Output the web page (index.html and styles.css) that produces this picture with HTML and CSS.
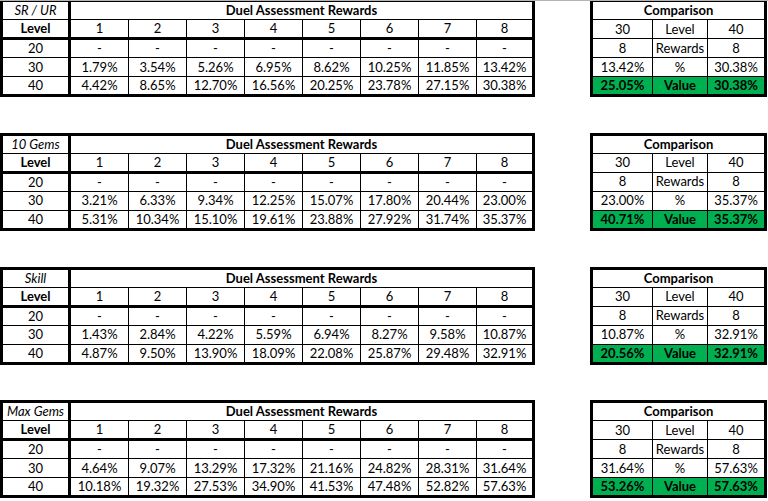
FILE: index.html
```html
<!DOCTYPE html>
<html>
<head>
<meta charset="utf-8">
<link rel="stylesheet" href="styles.css">
</head>
<body>
<div class="sheet">

  <div class="block">
    <div class="main">
      <div class="cell key title">SR / UR</div>
      <div class="cell span8 bold">Duel Assessment Rewards</div>
      <div class="cell key head bold">Level</div>
      <div class="cell head">1</div><div class="cell head">2</div><div class="cell head">3</div><div class="cell head">4</div><div class="cell head">5</div><div class="cell head">6</div><div class="cell head">7</div><div class="cell head">8</div>
      <div class="cell key">20</div>
      <div class="cell">-</div><div class="cell">-</div><div class="cell">-</div><div class="cell">-</div><div class="cell">-</div><div class="cell">-</div><div class="cell">-</div><div class="cell">-</div>
      <div class="cell key">30</div>
      <div class="cell">1.79%</div><div class="cell">3.54%</div><div class="cell">5.26%</div><div class="cell">6.95%</div><div class="cell">8.62%</div><div class="cell">10.25%</div><div class="cell">11.85%</div><div class="cell">13.42%</div>
      <div class="cell key">40</div>
      <div class="cell">4.42%</div><div class="cell">8.65%</div><div class="cell">12.70%</div><div class="cell">16.56%</div><div class="cell">20.25%</div><div class="cell">23.78%</div><div class="cell">27.15%</div><div class="cell">30.38%</div>
    </div>
    <div class="comp">
      <div class="cell span3 bold">Comparison</div>
      <div class="cell">30</div><div class="cell">Level</div><div class="cell">40</div>
      <div class="cell">8</div><div class="cell">Rewards</div><div class="cell">8</div>
      <div class="cell">13.42%</div><div class="cell">%</div><div class="cell">30.38%</div>
      <div class="cell green">25.05%</div><div class="cell green">Value</div><div class="cell green">30.38%</div>
    </div>
  </div>

  <div class="block">
    <div class="main">
      <div class="cell key title">10 Gems</div>
      <div class="cell span8 bold">Duel Assessment Rewards</div>
      <div class="cell key head bold">Level</div>
      <div class="cell head">1</div><div class="cell head">2</div><div class="cell head">3</div><div class="cell head">4</div><div class="cell head">5</div><div class="cell head">6</div><div class="cell head">7</div><div class="cell head">8</div>
      <div class="cell key">20</div>
      <div class="cell">-</div><div class="cell">-</div><div class="cell">-</div><div class="cell">-</div><div class="cell">-</div><div class="cell">-</div><div class="cell">-</div><div class="cell">-</div>
      <div class="cell key">30</div>
      <div class="cell">3.21%</div><div class="cell">6.33%</div><div class="cell">9.34%</div><div class="cell">12.25%</div><div class="cell">15.07%</div><div class="cell">17.80%</div><div class="cell">20.44%</div><div class="cell">23.00%</div>
      <div class="cell key">40</div>
      <div class="cell">5.31%</div><div class="cell">10.34%</div><div class="cell">15.10%</div><div class="cell">19.61%</div><div class="cell">23.88%</div><div class="cell">27.92%</div><div class="cell">31.74%</div><div class="cell">35.37%</div>
    </div>
    <div class="comp">
      <div class="cell span3 bold">Comparison</div>
      <div class="cell">30</div><div class="cell">Level</div><div class="cell">40</div>
      <div class="cell">8</div><div class="cell">Rewards</div><div class="cell">8</div>
      <div class="cell">23.00%</div><div class="cell">%</div><div class="cell">35.37%</div>
      <div class="cell green">40.71%</div><div class="cell green">Value</div><div class="cell green">35.37%</div>
    </div>
  </div>

  <div class="block">
    <div class="main">
      <div class="cell key title">Skill</div>
      <div class="cell span8 bold">Duel Assessment Rewards</div>
      <div class="cell key head bold">Level</div>
      <div class="cell head">1</div><div class="cell head">2</div><div class="cell head">3</div><div class="cell head">4</div><div class="cell head">5</div><div class="cell head">6</div><div class="cell head">7</div><div class="cell head">8</div>
      <div class="cell key">20</div>
      <div class="cell">-</div><div class="cell">-</div><div class="cell">-</div><div class="cell">-</div><div class="cell">-</div><div class="cell">-</div><div class="cell">-</div><div class="cell">-</div>
      <div class="cell key">30</div>
      <div class="cell">1.43%</div><div class="cell">2.84%</div><div class="cell">4.22%</div><div class="cell">5.59%</div><div class="cell">6.94%</div><div class="cell">8.27%</div><div class="cell">9.58%</div><div class="cell">10.87%</div>
      <div class="cell key">40</div>
      <div class="cell">4.87%</div><div class="cell">9.50%</div><div class="cell">13.90%</div><div class="cell">18.09%</div><div class="cell">22.08%</div><div class="cell">25.87%</div><div class="cell">29.48%</div><div class="cell">32.91%</div>
    </div>
    <div class="comp">
      <div class="cell span3 bold">Comparison</div>
      <div class="cell">30</div><div class="cell">Level</div><div class="cell">40</div>
      <div class="cell">8</div><div class="cell">Rewards</div><div class="cell">8</div>
      <div class="cell">10.87%</div><div class="cell">%</div><div class="cell">32.91%</div>
      <div class="cell green">20.56%</div><div class="cell green">Value</div><div class="cell green">32.91%</div>
    </div>
  </div>

  <div class="block">
    <div class="main">
      <div class="cell key title">Max Gems</div>
      <div class="cell span8 bold">Duel Assessment Rewards</div>
      <div class="cell key head bold">Level</div>
      <div class="cell head">1</div><div class="cell head">2</div><div class="cell head">3</div><div class="cell head">4</div><div class="cell head">5</div><div class="cell head">6</div><div class="cell head">7</div><div class="cell head">8</div>
      <div class="cell key">20</div>
      <div class="cell">-</div><div class="cell">-</div><div class="cell">-</div><div class="cell">-</div><div class="cell">-</div><div class="cell">-</div><div class="cell">-</div><div class="cell">-</div>
      <div class="cell key">30</div>
      <div class="cell">4.64%</div><div class="cell">9.07%</div><div class="cell">13.29%</div><div class="cell">17.32%</div><div class="cell">21.16%</div><div class="cell">24.82%</div><div class="cell">28.31%</div><div class="cell">31.64%</div>
      <div class="cell key">40</div>
      <div class="cell">10.18%</div><div class="cell">19.32%</div><div class="cell">27.53%</div><div class="cell">34.90%</div><div class="cell">41.53%</div><div class="cell">47.48%</div><div class="cell">52.82%</div><div class="cell">57.63%</div>
    </div>
    <div class="comp">
      <div class="cell span3 bold">Comparison</div>
      <div class="cell">30</div><div class="cell">Level</div><div class="cell">40</div>
      <div class="cell">8</div><div class="cell">Rewards</div><div class="cell">8</div>
      <div class="cell">31.64%</div><div class="cell">%</div><div class="cell">57.63%</div>
      <div class="cell green">53.26%</div><div class="cell green">Value</div><div class="cell green">57.63%</div>
    </div>
  </div>

</div>
</body>
</html>
```

FILE: styles.css
```css
html, body {
  background: #ffffff;
}

body {
  margin: 0;
  border-top: 1px solid #b4b4b4;
  font-family: Lato, "Noto Sans", "Liberation Sans", sans-serif;
  font-size: 13px;
  color: #000000;
  overflow: hidden;
}

.sheet {
  display: flex;
  flex-direction: column;
  gap: 35.75px;
  margin-top: -2px;
}

.block {
  display: flex;
  align-items: flex-start;
  gap: 55px;
}

.main,
.comp {
  display: grid;
  background: #000000;
  padding: 3px;
  gap: 1px;
}

.main {
  grid-template-columns: 67px repeat(7, 57px) 55px;
  grid-template-rows: 17px 19px 17px 18px 17px;
}

.comp {
  grid-template-columns: 59px 54px 56px;
  grid-template-rows: 17px 18px 18px 18px 17px;
}

.cell {
  box-sizing: border-box;
  background: #ffffff;
  display: flex;
  align-items: center;
  justify-content: center;
  line-height: 1;
  white-space: nowrap;
}

.key {
  border-right: 2px solid #000000;
}

.head {
  border-bottom: 2px solid #000000;
}

.title {
  font-style: italic;
}

.bold {
  font-weight: bold;
}

.span8 {
  grid-column: span 8;
}

.span3 {
  grid-column: span 3;
}

.green {
  background: #00b050;
  font-weight: bold;
}
```
